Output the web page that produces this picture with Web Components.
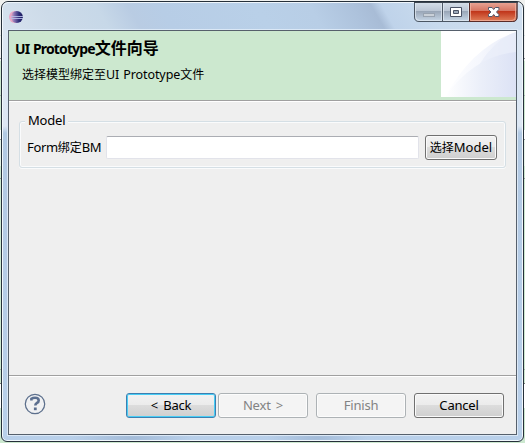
<!DOCTYPE html>
<html lang="zh-CN">
<head>
<meta charset="utf-8">
<title>UI Prototype文件向导</title>
<style>
html,body{margin:0;width:525px;height:443px;overflow:hidden}
body{font:13px/18px "Noto Sans","Noto Sans CJK SC",sans-serif;color:#000;box-sizing:border-box;padding:1px;
background:linear-gradient(#f0f1ef 0 35px,#d5dfe0 35px 36px,#f2f3f2 36px 58px,#8c8d93 58px 59px,#eff3ee 59px 61px,#cce8cf 61px 95px,#a8b8b0 95px 96px,#cce8cf 96px 130px,#fff 130px 139px,#999 139px 140px,#e5f2e7 140px 166px,#cce8cf 166px 178px,#999 178px 179px,#cce8cf 179px 369px,#a8b5aa 369px 370px,#cce8cf 370px 383px,#777 383px 384px,#fff 384px 408px,#cce8cf 408px)}
.big{font-size:16px;letter-spacing:0}
.small{font-size:12px;letter-spacing:0}
</style>
</head>
<body>
<wizard-window>
  <window-titlebar slot="title"></window-titlebar>
  <wizard-header slot="header"><span slot="title">UI Prototype<span class="big">文件向导</span></span><span slot="text"><span class="small">选择模型绑定至</span>UI Prototype<span class="small">文件</span></span></wizard-header>
  <group-box slot="content">
    <span slot="label">Model</span>
    <field-row><span slot="label">Form<span class="small">绑定</span>BM</span><push-button slot="action" style="--w:72px;--ls:0px"><span class="small">选择</span>Model</push-button></field-row>
  </group-box>
  <wizard-footer slot="footer">
    <push-button focus>&lt; Back</push-button>
    <push-button disabled style="margin-left:2px">Next &gt;</push-button>
    <push-button disabled style="margin-left:8px">Finish</push-button>
    <push-button style="margin-left:8px">Cancel</push-button>
  </wizard-footer>
</wizard-window>
<script>
function define(name, html){
  const t=document.createElement('template');
  t.innerHTML='<style>*,:host{box-sizing:border-box}</style>'+html;
  customElements.define(name,class extends HTMLElement{
    constructor(){super();this.attachShadow({mode:'open'}).append(t.content.cloneNode(true));}
  });
}

define('wizard-window',`<style>
:host{display:block;width:523px;height:441px;border:1px solid #26303a;border-radius:7px 7px 6px 6px;padding:0 6px 6px;
box-shadow:inset 0 0 0 1px #f2f8fd;
background:radial-gradient(ellipse 60px 10px at 130px 436px,#a3bbd8,#a3bbd800),radial-gradient(ellipse 50px 10px at 315px 436px,#a3bbd8,#a3bbd800),linear-gradient(#dae5f1 0,#dde7f3 124px,#b2c9e3 131px,#b9d0ea 100%)}
.client{height:405px;border:1px solid #56606c;background:#efefef;box-shadow:0 0 0 1px #dbe8f6;display:flex;flex-direction:column}
.content{flex:1;padding:13px 10px 0}
</style><slot name="title"></slot><div class="client"><slot name="header"></slot><div class="content"><slot name="content"></slot></div><slot name="footer"></slot></div>`);

define('window-titlebar',`<style>
:host{display:flex;height:28px;margin:0 -5px;padding-left:6px;justify-content:space-between;align-items:flex-start;border-radius:6px 6px 0 0;border-top:1px solid #eef5fb;
background:linear-gradient(60deg,#d6e2ee 0,#cddbe9 10%,#c7d8e8 20%,#b9cce3 26%,#b7cde6 32%,#b9d0e8 50%,#b8cee6 60%,#adc2dc 68%,#a8bcd6 71.5%,#bfd3ea 73.500%,#c8daed 82%,#d0dfef 100%)}
svg{display:block}
.logo{margin:6px 0 0 -1px}
.controls{margin:-1px 4px 0 0}
</style><svg class="logo" width="16" height="16" viewBox="0 0 16 16"><defs><linearGradient id="o"><stop stop-color="#f1b0c8"/><stop offset=".3" stop-color="#8572b0"/><stop offset=".65" stop-color="#32327d"/><stop offset="1" stop-color="#17175b"/></linearGradient></defs><ellipse cx="6.7" cy="8" rx="5.7" ry="6" fill="#e9a8c6"/><circle cx="8.8" cy="8" r="6.1" fill="url(#o)"/><path d="M3 7.500h12M3 9.500h12" stroke="#b5bde6" stroke-width=".9"/></svg>
<svg class="controls" width="104" height="20" viewBox="0 0 104 20"><defs>
<linearGradient id="g" x2="0" y2="1"><stop stop-color="#d7e0ea"/><stop offset=".46" stop-color="#bac5d3"/><stop offset=".47" stop-color="#98a5b6"/><stop offset="1" stop-color="#c8d8e8"/></linearGradient>
<linearGradient id="r" x2="0" y2="1"><stop stop-color="#e9a798"/><stop offset=".46" stop-color="#d67663"/><stop offset=".47" stop-color="#bf3217"/><stop offset="1" stop-color="#df7d59"/></linearGradient></defs>
<path d="M.5 0v15q0 4.500 4.500 4.500h93.500q4.500 0 4.500-4.500v-15z" fill="url(#g)" stroke="#4b5663"/>
<path d="M56 0v19h42.500q4 0 4-4v-15z" fill="url(#r)"/>
<path d="M1.500 0v14.500q0 4 4 4H27.500V0M29.500 0v18.500H54.500V0" fill="none" stroke="#e1e9f1" stroke-opacity=".75"/><path d="M56.500 0v18.500H98q3.500 0 3.500-4V0" fill="none" stroke="#f1b6a3" stroke-opacity=".75"/>
<path d="M28.500 0v19M55.500 0v19" stroke="#4e5966"/>
<path d="M55.500 0v19.500h43q4.500 0 4.500-4.500V0" fill="none" stroke="#5a2a26"/>
<path d="M0 .5h104" stroke="#3d4650"/>
<rect x="9.500" y="11.500" width="11" height="3" fill="#c9d0d8" stroke="#98a3b0"/>
<path d="M36.500 5.500h11v9h-11zM39.500 8.500v3h5v-3z" fill="#fff" fill-rule="evenodd" stroke="#4a5265"/>
<path d="M74.500 5.500h3.600l1.600 2 1.600-2h3.600v2l-2.400 2.500 2.400 2.500v2h-3.600l-1.600-2-1.600 2h-3.600v-2l2.400-2.500-2.400-2.500z" fill="#fff" stroke="#53576a"/>
</svg>`);

define('wizard-header',`<style>
:host{display:flex;height:71px;flex:none;justify-content:space-between;background:#cce8cf;border-bottom:1px solid #fff;box-shadow:inset 0 -1px #a0a0a0}
.t{padding:8px 0 0 6px;white-space:nowrap}
.title{height:18px;font-size:14px;font-weight:700;letter-spacing:-.88px;word-spacing:1px}
.text{height:18px;margin:9px 0 0 7px;font-size:12.500px;word-spacing:1px;letter-spacing:-.1px}
svg{display:block}
</style><div class="t"><div class="title"><slot name="title"></slot></div><div class="text"><slot name="text"></slot></div></div>
<svg width="75" height="66" viewBox="0 0 75 66"><defs><linearGradient id="a"><stop stop-color="#fff"/><stop offset=".5" stop-color="#f5f7fd"/><stop offset="1" stop-color="#e8ecf8"/></linearGradient><linearGradient id="b"><stop stop-color="#fff"/><stop offset=".5" stop-color="#ebeff9"/><stop offset="1" stop-color="#dce2f5"/></linearGradient></defs><path fill="#fff" d="M0 0h75v66H0z"/><path d="M4 66Q32 15 75 1v65z" fill="url(#a)"/><path d="M38 34Q54 8 75 1v22Q52 25 38 34z" fill="#e6ebf9" opacity=".6"/><path d="M4 66Q33 25 75 21v45z" fill="url(#b)"/></svg>`);

define('group-box',`<style>
:host{display:block;position:relative;height:53px;padding:20px 8px 0 7px}
.frame{position:absolute;inset:6px 0 0;border:1px solid #d5dfe5;border-radius:3px;box-shadow:inset 0 0 0 1px #fafbfc,0 1px #fafbfc;height:47px}
.label{position:absolute;left:6px;top:-4px;padding:0 3px;background:#efefef;letter-spacing:-.2px}
</style><div class="frame"></div><div class="label"><slot name="label"></slot></div><slot></slot>`);

define('field-row',`<style>
:host{display:flex;position:relative;align-items:center;height:25px}
.label{width:80px;height:20px;padding-left:1px;white-space:nowrap;letter-spacing:-.35px}
input{display:block;width:313px;height:23px;margin:0 6px 0 0;border:1px solid #e2e3ea;border-top-color:#abadb3;border-radius:2px;background:#fff;outline:0}
</style><div class="label"><slot name="label"></slot></div><input><slot name="action"></slot>`);

define('push-button',`<style>
:host{display:flex;flex:none;width:var(--w,90px);height:25px;border:1px solid #707070;border-radius:3px;align-items:center;justify-content:center;white-space:nowrap;letter-spacing:var(--ls,-.2px);word-spacing:2px;
background:linear-gradient(#f2f2f2,#ebebeb 50%,#dcdcdc 50%,#cfcfcf);box-shadow:inset 0 0 0 1px #fafafa}
:host([focus]){border-color:#3c7fb1;box-shadow:inset 0 0 0 1px #48cdf5}
:host([disabled]){color:#838383;border-color:#adb2b5;background:#f4f4f4;box-shadow:inset 0 0 0 1px #fcfcfc}
div{height:20px}
</style><div><slot></slot></div>`);

define('wizard-footer',`<style>
:host{display:flex;height:59px;flex:none;border-top:1px solid #a0a0a0;box-shadow:inset 0 1px #fff;padding:17px 12px 0 15px}
svg{display:block;margin-right:80px}
</style><svg width="22" height="22" viewBox="0 0 22 22"><circle cx="11" cy="11" r="9.700" fill="#f0f1f3" stroke="#5c6f8c" stroke-width="1.250"/><path d="M7.400 7.500V5.800Q8.800 4.700 11 4.700q3.700 0 3.700 2.700 0 1.500-1.700 2.500-1.700 1.100-1.700 2.600" fill="none" stroke="#5b6f90" stroke-width="2.600"/><path d="M9.900 14.500h2.800v2.700H9.900z" fill="#5b6f90"/></svg><slot></slot>`);
</script>
</body>
</html>
